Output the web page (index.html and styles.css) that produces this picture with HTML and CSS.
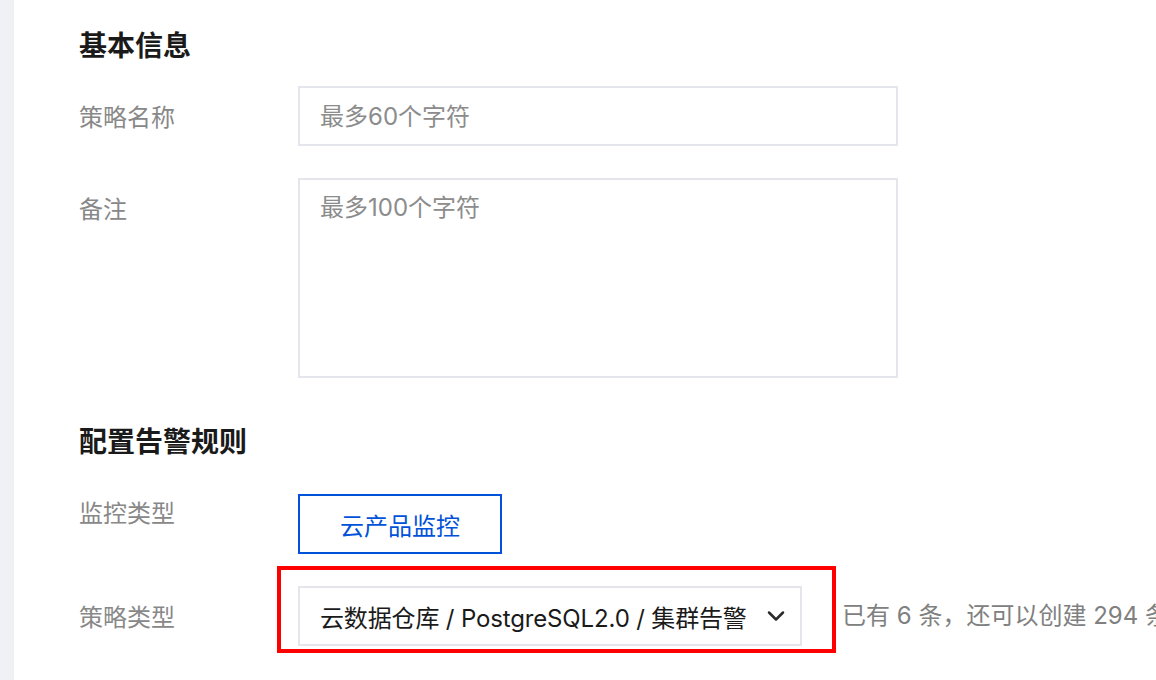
FILE: index.html
```html
<!DOCTYPE html>
<html lang="zh-CN">
<head>
<meta charset="utf-8">
<title>新建告警策略</title>
<link rel="stylesheet" href="styles.css">
</head>
<body>
<div class="page">
  <aside class="side"></aside>
  <main class="content">
    <h2 class="section-title">基本信息</h2>
    <div class="form-row">
      <label class="form-label">策略名称</label>
      <input class="text-input" type="text" placeholder="最多60个字符">
    </div>
    <div class="form-row">
      <label class="form-label">备注</label>
      <textarea class="text-area" placeholder="最多100个字符"></textarea>
    </div>

    <h2 class="section-title section-title--second">配置告警规则</h2>
    <div class="form-row">
      <label class="form-label form-label--flush">监控类型</label>
      <button class="tab-btn" type="button">云产品监控</button>
    </div>
    <div class="form-row">
      <label class="form-label">策略类型</label>
      <div class="select-wrap">
        <div class="select">
          <span class="select-value">云数据仓库 / PostgreSQL2.0 / 集群告警</span>
          <svg class="chevron" width="18" height="12" viewBox="0 0 18 12" aria-hidden="true">
            <path d="M2 2.5 L9 9.5 L16 2.5" fill="none" stroke="#2b2b2b" stroke-width="2.5" stroke-linecap="round" stroke-linejoin="round"/>
          </svg>
        </div>
        <div class="highlight"></div>
      </div>
      <span class="form-hint">已有 6 条，还可以创建 294 条</span>
    </div>
  </main>
</div>
</body>
</html>
```

FILE: styles.css
```css
html, body {
  margin: 0;
  padding: 0;
  background: #ffffff;
  overflow: hidden;
}

body {
  font-family: Inter, "Noto Sans CJK SC", "Noto Sans", sans-serif;
  width: 1156px;
  height: 680px;
}

.page {
  display: flex;
  height: 680px;
}

.side {
  flex: 0 0 14px;
  background: #eff1f5;
}

.content {
  flex: 1;
  padding: 24px 0 0 65px;
  min-width: 0;
}

.section-title {
  margin: 0 0 22px 0;
  font-size: 28px;
  line-height: 40px;
  font-weight: 700;
  color: #1a1a1a;
  font-family: "Noto Sans CJK SC", sans-serif;
}

.section-title--second {
  margin-top: 42px;
  margin-bottom: 34px;
}

.form-row {
  display: flex;
  align-items: flex-start;
  margin-bottom: 32px;
  white-space: nowrap;
}

.form-label {
  flex: 0 0 219px;
  padding-top: 12px;
  font-size: 24px;
  line-height: 36px;
  color: #888888;
  font-family: "Noto Sans CJK SC", sans-serif;
}

.form-label--flush {
  padding-top: 0;
}

.text-input,
.text-area {
  box-sizing: border-box;
  width: 600px;
  border: 2px solid #e5e6eb;
  border-radius: 0;
  padding: 0 20px;
  font-family: Inter, "Noto Sans CJK SC", sans-serif;
  font-size: 24px;
  color: #1a1a1a;
  background: #ffffff;
  outline: none;
  margin: 0;
}

.text-input {
  height: 60px;
  line-height: 56px;
}

.text-area {
  height: 200px;
  padding-top: 10px;
  line-height: 36px;
  resize: none;
  display: block;
}

.text-input::placeholder,
.text-area::placeholder {
  color: #8c8c8c;
  opacity: 1;
}

.tab-btn {
  box-sizing: border-box;
  width: 204px;
  height: 60px;
  border: 2px solid #0052d9;
  background: #ffffff;
  color: #0052d9;
  font-size: 24px;
  font-family: "Noto Sans CJK SC", sans-serif;
  padding: 0;
  margin: 0;
}

.select-wrap {
  position: relative;
}

.select {
  box-sizing: border-box;
  width: 504px;
  height: 60px;
  border: 2px solid #e5e6eb;
  display: flex;
  align-items: center;
  justify-content: space-between;
  padding: 0 15px 0 20px;
  background: #ffffff;
}

.select-value {
  font-size: 24px;
  color: #1a1a1a;
  letter-spacing: -0.15px;
}

.chevron {
  display: block;
  flex: 0 0 auto;
}

.highlight {
  position: absolute;
  left: -21px;
  top: -20px;
  right: -34px;
  bottom: -7px;
  border: 4px solid #ff0000;
  pointer-events: none;
}

.form-hint {
  margin-left: 40px;
  font-size: 24px;
  line-height: 60px;
  color: #808080;
}
```
